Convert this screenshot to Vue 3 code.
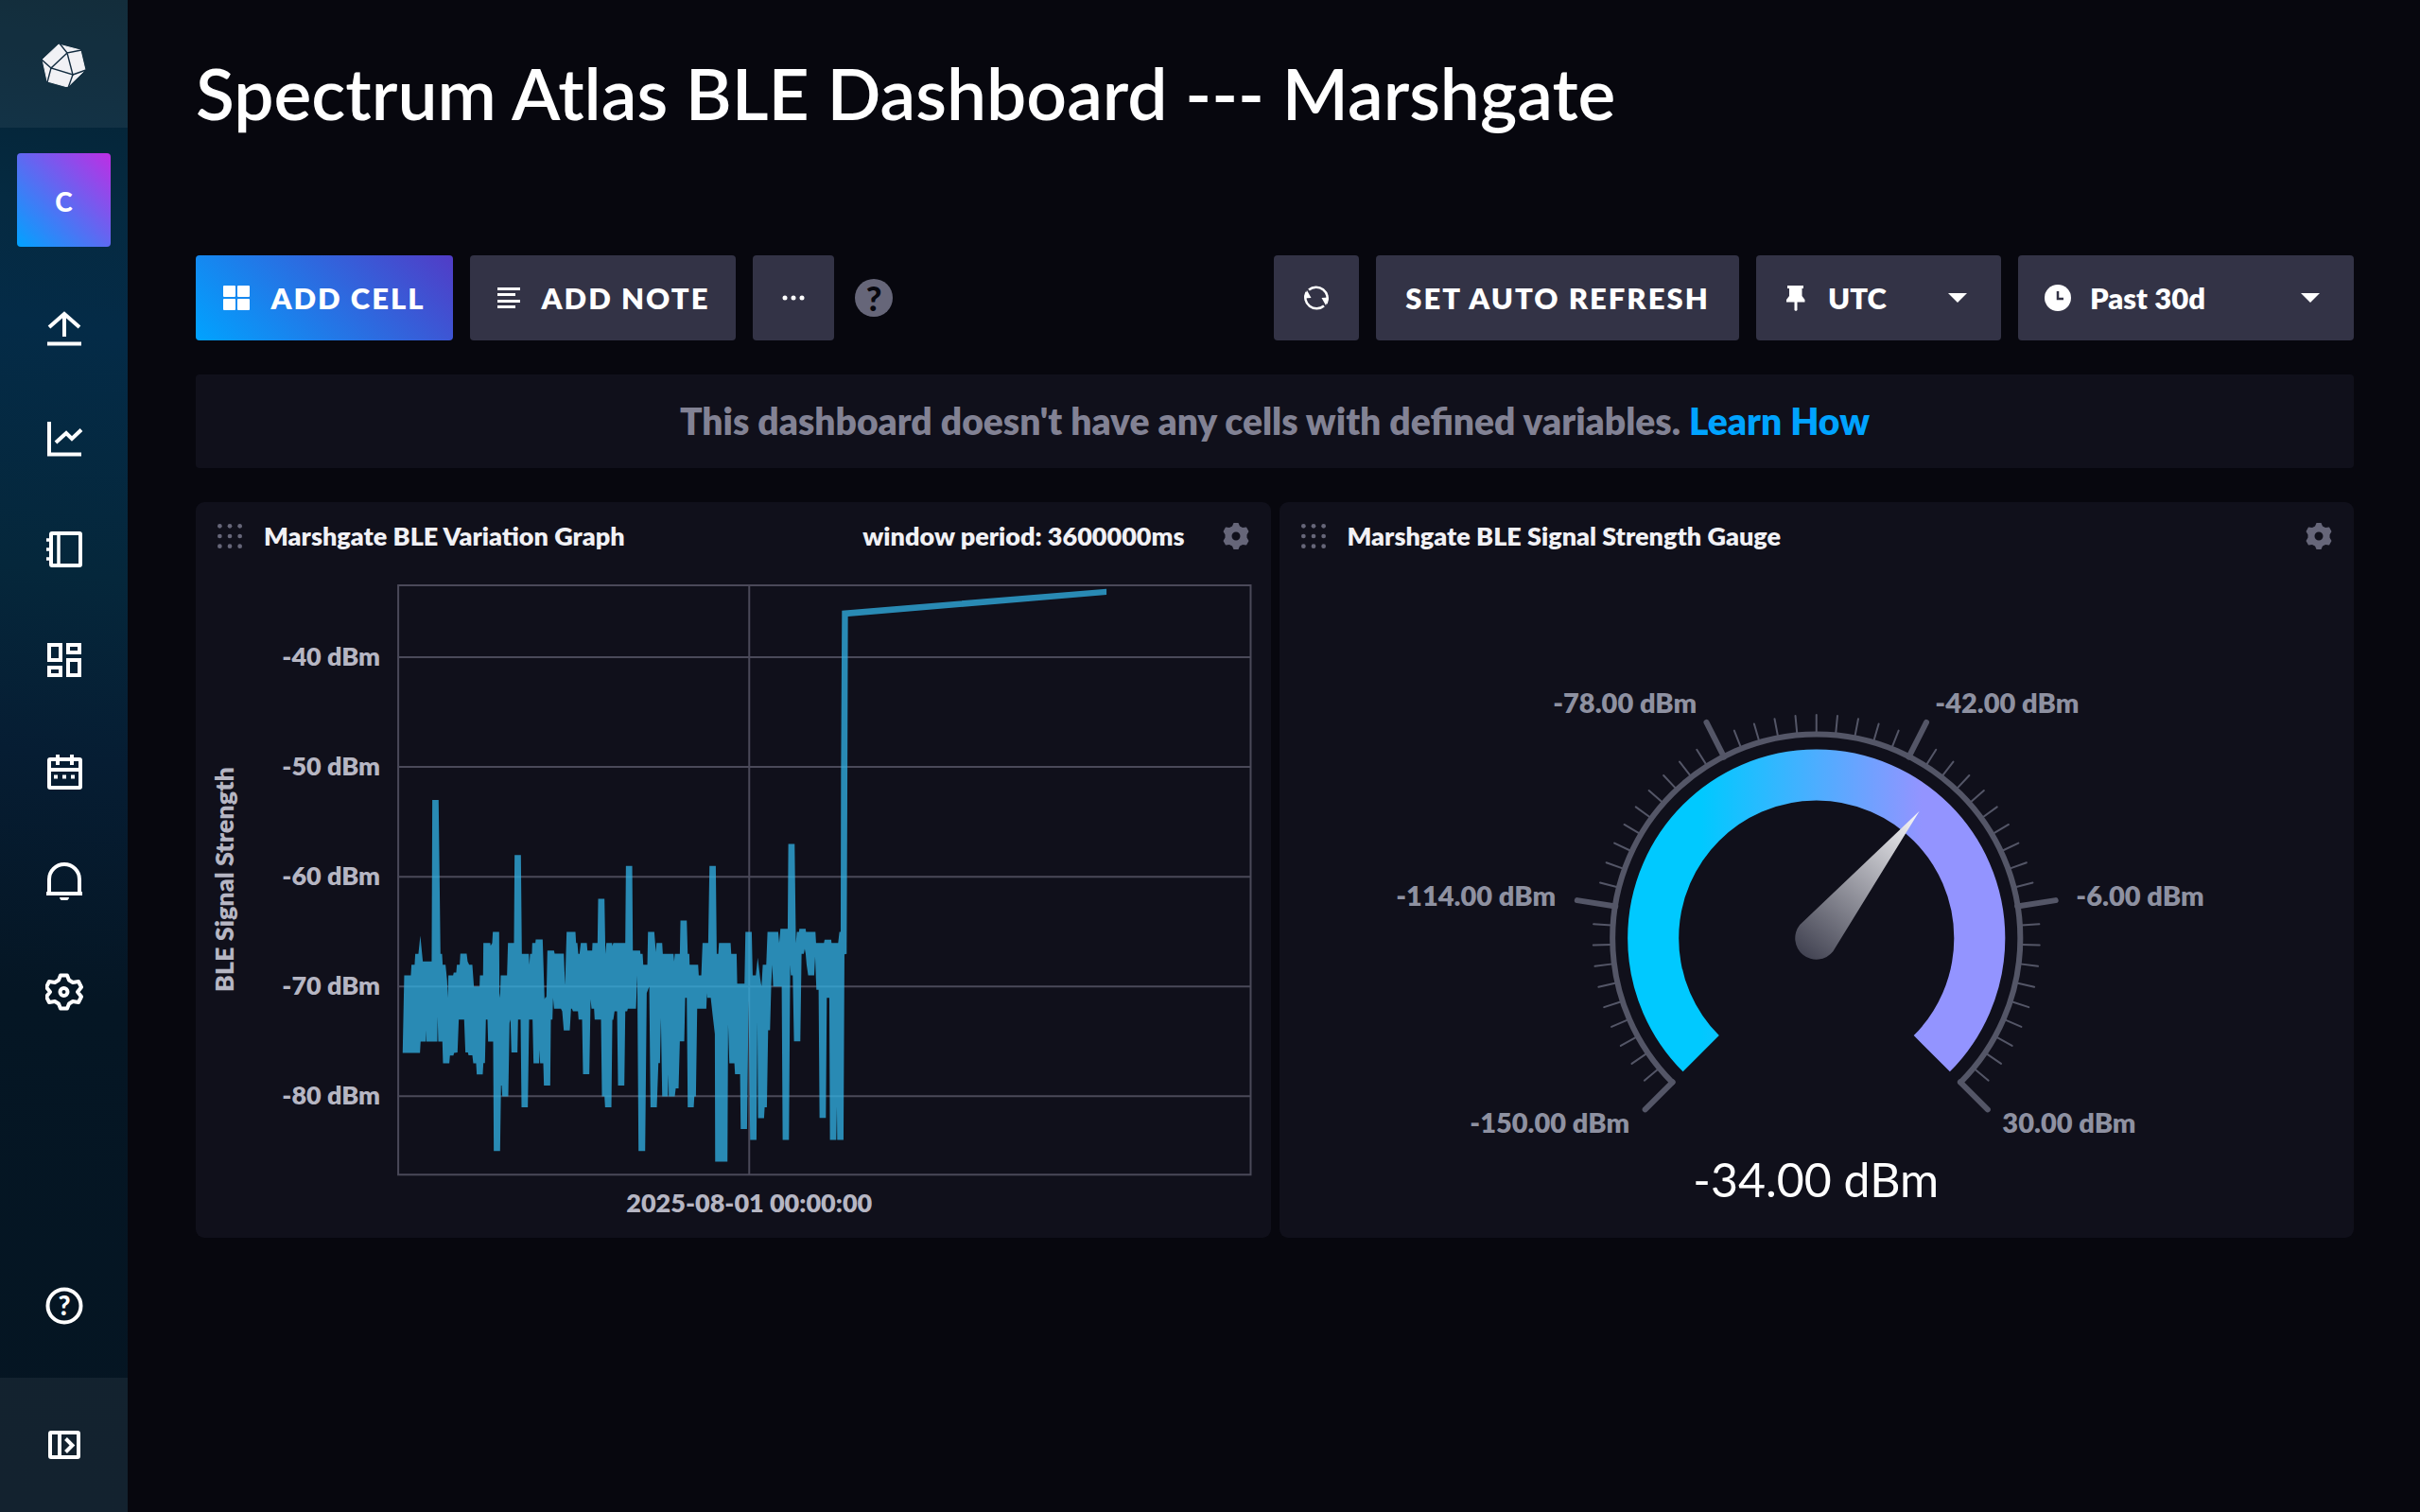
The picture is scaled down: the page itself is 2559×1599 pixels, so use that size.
<script setup>
const navItems = [
  { name: 'Load Data', icon: 'upload' },
  { name: 'Data Explorer', icon: 'graph' },
  { name: 'Notebooks', icon: 'notebook' },
  { name: 'Dashboards', icon: 'boards' },
  { name: 'Tasks', icon: 'calendar' },
  { name: 'Alerts', icon: 'bell' },
  { name: 'Settings', icon: 'gear' },
]

// Chart: 11.6 units per dBm, -40 dBm sits at y = 695
const yTicks = [-40, -50, -60, -70, -80].map((value) => ({
  label: `${value} dBm`,
  y: 695 + (-40 - value) * 11.6,
}))

const signalArea = `M77,880 82,634 103,634 105,600 115,600 117,566 127,566 133,508 141,590 169,590 171,78 191,78
197,566 202,566 204,600 213,600 218,650 220,705 222,634 237,634 239,625 247,625 249,600 258,600 260,565 280,565
283,590 288,600 298,600 303,669 321,669 322,634 332,634 333,531 355,531 356,540 361,531 363,496 383,496 384,690 386,705
388,634 408,634 411,531 430,531 432,252 452,252 455,566 477,566 479,600 481,566 487,566 488,531 498,531 499,520
521,520 527,710 530,703 533,703 536,555 557,555 559,565 588,565 592,665 597,496 625,496 627,531 631,531 634,566
638,566 642,531 661,531 663,555 678,555 679,531 695,531 697,391 717,391 720,566 723,531 741,531 742,541 745,531
783,531 785,287 805,287 807,555 830,555 831,566 838,566 840,600 853,600 855,496 875,496 880,560 882,531 900,531
902,566 936,566 938,590 940,566 956,566 958,460 978,460 981,566 986,566 987,600 1014,600 1016,634 1024,634
1028,531 1046,531 1050,287 1070,287 1073,566 1078,566 1080,531 1117,531 1119,566 1136,566 1138,660 1161,660
1164,496 1184,496 1187,634 1197,634 1203,578 1211,645 1215,669 1219,600 1230,600 1234,496 1268,496 1271,531
1275,486 1298,486 1300,217 1320,217 1324,531 1327,496 1334,496 1335,486 1355,486 1356,496 1386,496 1388,531
1413,531 1415,521 1436,521 1437,531 1458,531 1462,496 1466,496 1467,0 1470,-523 2309,-592 2309,-573 1489,-504
1487,100 1485,566 1478,567
1475,1156 1455,1156 1454,1050 1452,1156 1432,1156 1430,705 1422,705 1419,1086 1399,1086 1396,680 1389,680
1385,575 1382,634 1363,634 1358,600 1355,566 1352,550 1349,566 1342,566 1338,843 1318,843 1314,634 1308,634
1306,600 1302,1156 1282,1156 1279,669 1252,669 1249,600 1246,660 1242,808 1236,808 1232,1052 1225,1052
1223,1087 1204,1087 1202,780 1199,1156 1179,1156 1174,713 1169,1121 1149,1121 1147,947 1131,947 1129,913
1113,913 1109,790 1107,1225 1068,1225 1067,820 1060,760 1054,705 1043,705 1042,690 1040,740 1011,740 1007,1018
1002,1018 1000,1052 981,1052 978,705 973,705 970,843 956,843 952,992 943,992 940,1018 921,1018 920,947 918,1018
900,1018 896,770 893,912 888,912 883,1052 863,1052 859,669 855,680 851,690 846,1191 825,1191 821,634 817,740
791,740 789,748 783,748 780,983 760,983 757,748 749,748 745,775 742,775 739,1052 719,1052 717,1018 709,1018
706,774 686,774 684,740 676,740 673,710 669,947 649,947 646,774 635,774 633,748 617,748 614,740 611,740
607,809 588,809 583,748 579,740 557,740 554,705 552,774 547,774 545,983 525,983 523,913 513,913 511,870
510,913 492,913 489,774 478,774 474,1052 454,1052 451,774 443,774 441,878 422,878 419,774 416,785 412,1018
393,1018 391,983 389,983 386,1191 366,1191 364,844 348,844 346,774 341,774 338,912 333,912 331,948 312,948
310,913 301,913 298,887 286,887 284,878 276,878 272,774 255,774 251,878 240,880 238,888 227,888 225,913
205,913 203,844 190,844 188,765 187,844 152,844 151,808 150,844 134,844 132,880Z`

// Gauge: 270 degree sweep from -150 to 30 dBm
const MIN = -150
const MAX = 30
const value = -34
const needleAngle = ((value - MIN) / (MAX - MIN)) * 270 - 135
const ticks = Array.from({ length: 51 }, (_, i) => ({
  angle: -135 + i * 5.4,
  major: i % 10 === 0,
}))
const gaugeLabels = [
  { text: '-150.00 dBm', x: 1723, y: 1198, anchor: 'end' },
  { text: '-114.00 dBm', x: 1645, y: 958, anchor: 'end' },
  { text: '-78.00 dBm', x: 1794, y: 754, anchor: 'end' },
  { text: '-42.00 dBm', x: 2046, y: 754, anchor: 'start' },
  { text: '-6.00 dBm', x: 2195, y: 958, anchor: 'start' },
  { text: '30.00 dBm', x: 2117, y: 1198, anchor: 'start' },
]
const arc = (r) => {
  const d = r * Math.SQRT1_2
  return `M${-d},${d} A${r},${r} 0 1 1 ${d},${d}`
}
const dots = [2, 11, 20]
</script>

<template>
  <div class="app">
    <nav class="sidebar" aria-label="Main">
      <a class="brand" href="#" aria-label="Home">
        <svg width="48" height="48" viewBox="0 -3 48 48">
          <path fill="#f1f1f5" stroke="#f1f1f5" stroke-linejoin="round" d="M18,0 41,6 46,27 27.500,45 6,39 1,16z" />
          <path fill="none" stroke="#132c40" stroke-width="1.400" d="M19,-1 27,9 42,6 M27,9 10,25 33,32 27,9 M0,16 10,25 6,40 M33,32 28,46 M33,32 47,27" />
        </svg>
      </a>
      <button class="avatar" type="button">C</button>
      <ul class="nav-list">
        <li v-for="item in navItems" :key="item.name">
          <a href="#" :aria-label="item.name">
            <svg class="nav-icon" width="40" height="40" viewBox="0 0 40 40">
              <g v-if="item.icon === 'upload'">
                <path d="M20,29V4 M4,19 20,5 36,19" />
                <path d="M2,36.500H38" />
              </g>
              <g v-else-if="item.icon === 'graph'">
                <path d="M4,2V36.500H38" />
                <path d="M11,24 22,14 28,20 38,10.500" />
              </g>
              <g v-else-if="item.icon === 'notebook'">
                <rect x="6" y="3" width="31" height="34" rx="1" />
                <path d="M14,3V37 M1,10H6 M1,20H6 M1,30H6" stroke-width="3.500" />
              </g>
              <g v-else-if="item.icon === 'boards'">
                <path d="M4,4H16V20H4z M24,4H36V12H24z M4,28H16V36H4z M24,20H36V36H24z" />
              </g>
              <g v-else-if="item.icon === 'calendar'">
                <rect x="4" y="8" width="33" height="30" rx="1" />
                <path d="M4,19H37 M13,3V14 M28,3V14" />
                <path d="M9,26.500h4 M18,26.500h4 M27,26.500h4" />
              </g>
              <g v-else-if="item.icon === 'bell'">
                <path d="M4,33V18a16,16 0 0 1 32,0V33 M1,33H39" />
                <path d="M15,37h10a5,4 0 0 1-10,0z" fill="#fff" stroke="none" />
              </g>
              <g v-else>
                <path d="M16,2.500h7l2,5 4,2.500 6-1 3,6-4,5 4,5-3,6-6-1-4,2.500-2,5h-7l-2-5-4-2.500-6,1-3-6 4-5-4-5 3-6 6,1 4-2.500z" stroke-linejoin="round" />
                <circle cx="19.500" cy="20" r="4" />
              </g>
            </svg>
          </a>
        </li>
      </ul>
      <a class="help-link" href="#" aria-label="Help">
        <svg class="nav-icon" width="40" height="40" viewBox="0 0 40 40">
          <circle cx="20" cy="20" r="17.500" />
          <text class="glyph" x="20" y="30" text-anchor="middle">?</text>
        </svg>
      </a>
      <button class="expand" type="button" aria-label="Expand sidebar">
        <svg class="nav-icon" width="34" height="30" viewBox="0 0 34 30">
          <rect x="2" y="2" width="30" height="26" rx="1" />
          <path d="M12,2V28 M18.500,8.500 25.500,15.500 18.500,22.500" />
        </svg>
      </button>
    </nav>

    <main class="page">
      <h1 class="page-title">Spectrum Atlas BLE Dashboard --- Marshgate</h1>

      <div class="toolbar">
        <button class="btn btn-primary" type="button">
          <svg width="28" height="26" viewBox="0 0 28 26" fill="#fff">
            <rect width="13" height="12" rx="1" /><rect x="15" width="13" height="12" rx="1" />
            <rect y="14" width="13" height="12" rx="1" /><rect x="15" y="14" width="13" height="12" rx="1" />
          </svg>
          Add Cell
        </button>
        <button class="btn btn-note" type="button">
          <svg width="26" height="24" viewBox="0 0 26 24" stroke="#fff" stroke-width="3">
            <path d="M1,2.500H25 M1,8.500H20 M1,15.500H25 M1,21.500H20" />
          </svg>
          Add Note
        </button>
        <button class="btn btn-more" type="button" aria-label="More options">
          <svg width="26" height="6" viewBox="0 0 26 6" fill="#fff">
            <circle cx="4" cy="3" r="2.500" /><circle cx="13" cy="3" r="2.500" /><circle cx="22" cy="3" r="2.500" />
          </svg>
        </button>
        <button class="question" type="button" aria-label="Help with dashboards">?</button>

        <div class="toolbar-right">
          <button class="btn btn-square" type="button" aria-label="Refresh">
            <svg width="28" height="28" viewBox="0 0 28 28" fill="none" stroke="#fff" stroke-width="2.500">
              <path d="M6,5.500A12,12 0 0 1 24.500,20 M22,22.500A12,12 0 0 1 3.500,8" />
              <path d="M1,14.500 4,6 8.500,14z M27,13.500 24,22 19.500,14z" fill="#fff" stroke="none" />
            </svg>
          </button>
          <button class="btn btn-auto" type="button">Set Auto Refresh</button>
          <div class="dropdown zone">
            <svg width="20" height="28" viewBox="0 0 20 28" fill="#fff">
              <path d="M1,1H18V4H16.500V12L19.500,16V18.500H11.500V27L10,28 8.500,27V18.500H0V16L3,12V4H1z" />
            </svg>
            <select aria-label="Time zone"><option>UTC</option><option>Local</option></select>
            <svg class="caret" width="20" height="10" viewBox="0 0 20 10"><path d="M0,0H20L10,10z" fill="#fff" /></svg>
          </div>
          <div class="dropdown range">
            <svg width="28" height="28" viewBox="0 0 28 28">
              <circle cx="14" cy="14" r="14" fill="#fff" />
              <path d="M14,7V15H20" fill="none" stroke="#333346" stroke-width="2.500" />
            </svg>
            <select aria-label="Time range"><option>Past 30d</option><option>Past 7d</option></select>
            <svg class="caret" width="20" height="10" viewBox="0 0 20 10"><path d="M0,0H20L10,10z" fill="#fff" /></svg>
          </div>
        </div>
      </div>

      <p class="banner">This dashboard doesn't have any cells with defined variables. <a href="#">Learn How</a></p>

      <div class="cells">
        <section class="cell">
          <header class="cell-head">
            <svg width="26" height="26" viewBox="0 0 22 22" fill="#666679" aria-hidden="true">
              <template v-for="y in dots" :key="y"><circle v-for="x in dots" :key="x" :cx="x" :cy="y" r="2" /></template>
            </svg>
            <h2>Marshgate BLE Variation Graph</h2>
            <span class="period">window period: 3600000ms</span>
            <button class="cog" type="button" aria-label="Configure cell">
              <svg width="28" height="28" viewBox="0 0 28 28">
                <path fill="#666679" fill-rule="evenodd" d="M11.500,0h5l1.500,3.500 3,1.500 4-.500 2.500,4.500-2,3.500v3l2,3.500-2.500,4.500-4-.500-3,1.500-1.500,3.500h-5l-1.500-3.500-3-1.500-4,.500L.500,19l2-3.500v-3L.500,9 3,4.500 7,5l3-1.500z M14,9.500a4.500,4.500 0 1 0 0,9 4.500,4.500 0 1 0 0-9z" />
              </svg>
            </button>
          </header>
          <svg class="plot" viewBox="207 603 1136 706" role="img" aria-label="BLE signal strength over time">
            <g fill="none" stroke="#4a4959" stroke-width="2">
              <rect x="421" y="619" width="901" height="623" />
              <path d="M792,619V1242" />
              <path v-for="t in yTicks" :key="t.y" :d="`M421,${t.y}H1322`" />
            </g>
            <path class="series" transform="translate(400 820) scale(.33333)" :d="signalArea" />
            <g class="axis">
              <text v-for="t in yTicks" :key="t.label" x="402" :y="t.y + 9" text-anchor="end">{{ t.label }}</text>
              <text x="792" y="1282" text-anchor="middle">2025-08-01 00:00:00</text>
              <text transform="translate(247 930) rotate(-90)" text-anchor="middle">BLE Signal Strength</text>
            </g>
          </svg>
        </section>

        <section class="cell">
          <header class="cell-head">
            <svg width="26" height="26" viewBox="0 0 22 22" fill="#666679" aria-hidden="true">
              <template v-for="y in dots" :key="y"><circle v-for="x in dots" :key="x" :cx="x" :cy="y" r="2" /></template>
            </svg>
            <h2>Marshgate BLE Signal Strength Gauge</h2>
            <button class="cog" type="button" aria-label="Configure cell">
              <svg width="28" height="28" viewBox="0 0 28 28">
                <path fill="#666679" fill-rule="evenodd" d="M11.500,0h5l1.500,3.500 3,1.500 4-.500 2.500,4.500-2,3.500v3l2,3.500-2.500,4.500-4-.500-3,1.500-1.500,3.500h-5l-1.500-3.500-3-1.500-4,.500L.500,19l2-3.500v-3L.500,9 3,4.500 7,5l3-1.500z M14,9.500a4.500,4.500 0 1 0 0,9 4.500,4.500 0 1 0 0-9z" />
              </svg>
            </button>
          </header>
          <svg class="plot" viewBox="1353 603 1136 706" role="img" aria-label="Signal strength gauge">
            <defs>
              <linearGradient id="band" gradientUnits="userSpaceOnUse" x1="-122" y1="0" x2="112" y2="0">
                <stop offset="0" stop-color="#00c9ff" />
                <stop offset="1" stop-color="#9394ff" />
              </linearGradient>
              <linearGradient id="needle" gradientUnits="userSpaceOnUse" x1="0" y1="22" x2="0" y2="-173">
                <stop offset="0" stop-color="#434453" />
                <stop offset="1" stop-color="#fafafc" />
              </linearGradient>
            </defs>
            <g transform="translate(1920.500 992)">
              <g stroke="#545667" fill="none" stroke-linecap="round">
                <path
                  v-for="t in ticks"
                  :key="t.angle"
                  :d="t.major ? 'M0,-215V-256' : 'M0,-217V-236'"
                  :stroke-width="t.major ? 6 : 2"
                  :transform="`rotate(${t.angle})`"
                />
                <path :d="arc(215.500)" stroke-width="6" />
              </g>
              <path :d="arc(172.500)" fill="none" stroke="url(#band)" stroke-width="54" />
              <path d="M-22.500,0A22.500,22.500 0 0 0 22.500,0L0,-173z" fill="url(#needle)" :transform="`rotate(${needleAngle})`" />
            </g>
            <g class="gauge-label">
              <text v-for="l in gaugeLabels" :key="l.text" :x="l.x" :y="l.y" :text-anchor="l.anchor">{{ l.text }}</text>
            </g>
            <text class="gauge-value" x="1920" y="1266" text-anchor="middle">-34.00 dBm</text>
          </svg>
        </section>
      </div>
    </main>
  </div>
</template>

<style>
body {
  margin: 0;
  background: #07070e;
}
</style>

<style scoped>
.app {
  display: grid;
  grid-template-columns: 135px minmax(0, 1fr);
  min-height: 100vh;
  color: #fff;
  font-family: Lato, "Open Sans", sans-serif;
}

button,
select {
  border: 0;
  padding: 0;
  margin: 0;
  background: none;
  color: inherit;
  font: inherit;
  cursor: pointer;
}

svg {
  display: block;
  flex: none;
}

.sidebar {
  display: flex;
  flex-direction: column;
  background: linear-gradient(188deg, #05202f 0%, #052a41 14%, #042b47 22%, #05273b 38%, #061d33 50%, #051624 66%, #051522 100%);
}

.brand,
.expand {
  display: flex;
  align-items: center;
  justify-content: center;
  background: rgba(255, 255, 255, 0.06);
}

.brand {
  height: 135px;
}

.avatar {
  width: 99px;
  height: 99px;
  margin: 27px auto;
  padding-top: 3px;
  border-radius: 4px;
  background: linear-gradient(45deg, #00a3ff, #be2ee4);
  font-size: 28px;
  font-weight: 900;
}

.nav-list {
  margin: 0;
  padding: 0;
  list-style: none;
}

.nav-list a,
.help-link {
  display: flex;
  align-items: center;
  justify-content: center;
  height: 117px;
}

.nav-icon {
  fill: none;
  stroke: #fff;
  stroke-width: 4;
}

.glyph {
  fill: #fff;
  stroke: none;
  font-size: 28px;
  font-weight: 900;
}

.help-link {
  margin-top: auto;
  margin-bottom: 18px;
}

.expand {
  width: 100%;
  height: 142px;
}

.page {
  padding: 53px 70px 72px 72px;
}

.page-title {
  margin: 0 0 127px;
  font-size: 75px;
  font-weight: 600;
  line-height: 90px;
}

.toolbar {
  display: flex;
  align-items: center;
  gap: 18px;
}

.toolbar-right {
  display: flex;
  gap: 18px;
  margin-left: auto;
}

.btn,
.dropdown {
  display: flex;
  align-items: center;
  height: 90px;
  border-radius: 4px;
  background: #333346;
  font-size: 31px;
  font-weight: 800;
}

.btn {
  justify-content: center;
  gap: 22px;
  letter-spacing: 2px;
  text-transform: uppercase;
}

.btn-primary {
  width: 272px;
  background: linear-gradient(45deg, #00a3ff, #513cc6);
}

.btn-note {
  width: 281px;
}

.btn-more {
  width: 86px;
}

.btn-square {
  width: 90px;
}

.btn-auto {
  width: 384px;
}

.question {
  width: 40px;
  height: 40px;
  margin-left: 4px;
  border-radius: 50%;
  background: #666679;
  color: #07070e;
  font-size: 36px;
  font-weight: 900;
  line-height: 40px;
}

.dropdown {
  box-sizing: border-box;
  padding: 0 36px 0 32px;
}

.dropdown select {
  flex: 1;
  min-width: 0;
  height: 90px;
  appearance: none;
}

.zone {
  width: 259px;
  gap: 24px;
}

.range {
  width: 355px;
  padding-left: 28px;
  gap: 20px;
}

.banner {
  margin: 36px 0;
  border-radius: 4px;
  background: #10101b;
  color: #828294;
  font-size: 39px;
  font-weight: 800;
  line-height: 99px;
  text-align: center;
}

.banner a {
  color: #00a3ff;
  text-decoration: none;
}

.cells {
  display: grid;
  grid-template-columns: repeat(2, minmax(0, 1fr));
  gap: 9px;
}

.cell {
  border-radius: 9px;
  background: #10101b;
}

.cell-head {
  display: flex;
  align-items: center;
  height: 72px;
  padding: 0 23px;
  color: #f1f1f5;
  font-size: 27px;
  font-weight: 800;
}

.cell-head h2 {
  margin: 0 auto 0 23px;
  font: inherit;
}

.cell-head h2,
.period {
  padding-bottom: 2px;
}

.period {
  margin-right: 40px;
}

.plot {
  width: 100%;
  height: auto;
}

.series {
  fill: #31b0e2;
  opacity: 0.77;
}

.axis {
  fill: #b6b6c3;
  font-size: 27px;
  font-weight: 800;
}

.gauge-label {
  fill: #8e91a1;
  font-size: 29px;
  font-weight: 800;
}

.gauge-value {
  fill: #fff;
  font-size: 50px;
}
</style>
